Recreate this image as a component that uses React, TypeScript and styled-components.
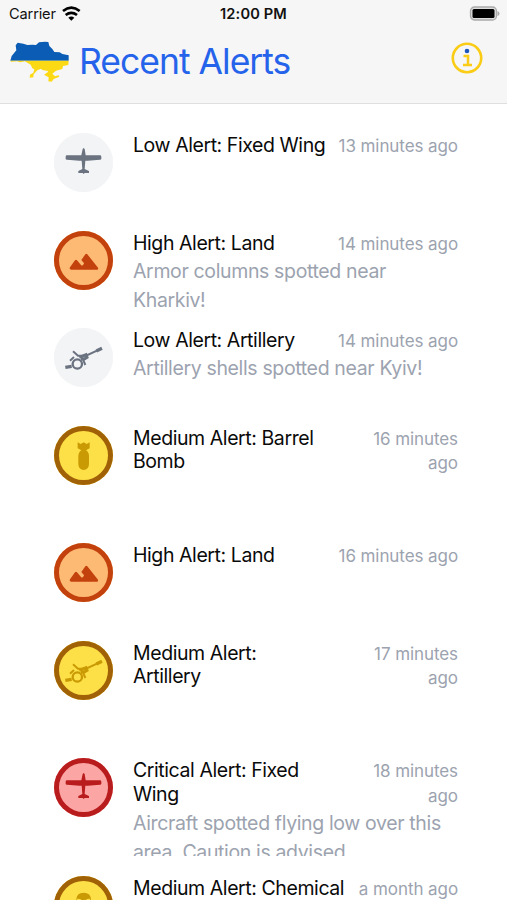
import React from "react";
import styled, { createGlobalStyle } from "styled-components";

const GlobalStyle = createGlobalStyle`
  * { box-sizing: border-box; }
  html, body { margin: 0; padding: 0; background: #fff; }
  body { font-family: Inter, "Liberation Sans", sans-serif; overflow: hidden; }
`;

type Level = "low" | "medium" | "high" | "critical";
type Kind = "plane" | "land" | "artillery" | "bomb" | "chemical";

const palette: Record<Level, { fill: string; ring: string; glyph: string }> = {
  low: { fill: "#f3f4f6", ring: "#f3f4f6", glyph: "#6b7280" },
  medium: { fill: "#fde047", ring: "#a16207", glyph: "#ca9a04" },
  high: { fill: "#fdba74", ring: "#c2410c", glyph: "#c2410c" },
  critical: { fill: "#fca5a5", ring: "#b91c1c", glyph: "#b91c1c" },
};

const Screen = styled.div`
  width: 507px;
  height: 900px;
  overflow: hidden;
  background: #fff;
`;

const Header = styled.header`
  height: 104px;
  background: #f6f6f6;
  border-bottom: 1px solid #dfdfe0;
`;

const StatusBar = styled.div`
  display: grid;
  grid-template-columns: 1fr auto 1fr;
  align-items: center;
  height: 27px;
  padding: 0 7px 0 9px;
  color: #111;
`;

const Carrier = styled.div`
  display: flex;
  align-items: center;
  gap: 6px;
  font-size: 14.6px;
  letter-spacing: -0.15px;
`;

const Clock = styled.div`
  margin-left: -2px;
  font-size: 14.6px;
  font-weight: 600;
  letter-spacing: 0.15px;
`;

const BatterySlot = styled.div`
  display: flex;
  justify-content: flex-end;
`;

const TitleBar = styled.div`
  display: flex;
  align-items: center;
  height: 70px;
  padding: 0 24px 0 10px;
`;

const PageTitle = styled.h1`
  flex: 1;
  margin: 0 0 0 9px;
  font-size: 35.5px;
  font-weight: 400;
  line-height: 44px;
  letter-spacing: -1px;
  color: #2563eb;
`;

const InfoButton = styled.button`
  display: block;
  padding: 0;
  margin: 0 0 8px;
  border: 0;
  background: none;
  line-height: 0;
`;

const List = styled.ul`
  margin: 0;
  padding: 29px 49px 0 54px;
  list-style: none;
`;

const Row = styled.li<{ $tall: boolean }>`
  display: flex;
  gap: 20px;
  height: ${(p) => (p.$tall ? 117.3 : 97.7)}px;
  padding-bottom: 19.5px;
`;

const Badge = styled.div<{ $level: Level }>`
  flex: none;
  width: 59px;
  height: 59px;
  border-radius: 50%;
  background: ${(p) => palette[p.$level].fill};
  box-shadow: inset 0 0 0 5px ${(p) => palette[p.$level].ring};
  color: ${(p) => palette[p.$level].glyph};
`;

const Body = styled.div`
  flex: 1;
  min-width: 0;
  padding-top: 1px;
  overflow: hidden;
`;

const Heading = styled.div`
  display: flex;
  justify-content: space-between;
  align-items: flex-start;
`;

const AlertTitle = styled.h2`
  margin: 0;
  font-size: 19.5px;
  font-weight: 400;
  line-height: 23.4px;
  letter-spacing: -0.42px;
  color: #0a0a0a;
  white-space: pre;
`;

const Time = styled.time`
  font-size: 17px;
  line-height: 24.4px;
  letter-spacing: -0.08px;
  color: #9ca3af;
  text-align: right;
  white-space: pre;
`;

const Description = styled.p`
  margin: 0.5px 0 0;
  font-size: 19.5px;
  line-height: 29.3px;
  letter-spacing: -0.36px;
  color: #9ca3af;
  white-space: pre;
`;

const glyphs: Record<Kind, React.ReactNode> = {
  plane: (
    <path d="M117 76l3-3 3 3 3 19h43q4 0 4 4v6q0 3-4 3l-37 3h-7l-2 25 13 6v6h-13l-3 3-3-3h-13v-6l12-6-2-25h-7l-37-3q-4 0-4-3v-6q0-4 4-4h43z" />
  ),
  land: (
    <path d="M79 142q-2-2 0-5l15-21q3-4 6 0l12 14q3 3 6 0l2-3q2-2 0-4l-7-8 12-17q3-4 6 0l32 40q2 6-3 6H82z" />
  ),
  artillery: (
    <g fill="none" stroke="currentColor">
      <circle cx="101" cy="136" r="14" strokeWidth="7" />
      <path d="M88 98l15 13h24l33-15" strokeWidth="6" />
      <path d="M158 97l17-8" strokeWidth="10" />
      <path d="M107 116l20-8 3 8-8 5h-10" strokeWidth="9" />
      <path d="M79 126l12-11M118 122l7 17" strokeWidth="6" />
      <path d="M65 146l19-3" strokeWidth="10" />
    </g>
  ),
  bomb: (
    <path d="M102 77L111 82L120 77L129 82L138 77V95L127 101Q136 107 136 118V143Q135 159 120 160Q105 159 104 143V118Q104 107 113 101L102 95Z" />
  ),
  chemical: (
    <path
      fillRule="evenodd"
      d="M120 78q22 0 22 22v20q-4 14-22 20-18-6-22-20v-20q0-22 22-22zM101 96q-2 8 5 13 9 1 11-6-6-8-16-7zm38 0q-10-1-16 7 2 7 11 6 7-5 5-13z"
    />
  ),
};

const Glyph = ({ kind }: { kind: Kind }) => (
  <svg width="59" height="59" viewBox="31 28 177 177" fill="currentColor" display="block">
    {glyphs[kind]}
  </svg>
);

const Wifi = () => (
  <svg width="19" height="15" viewBox="186 16 57 45" fill="none" stroke="#000" strokeWidth="8">
    <path d="M189 31q25-20 50 0" />
    <path d="M197 43q17-13 34 0" />
    <path d="M205 51q9-7 18 0l-9 9z" fill="#000" stroke="none" />
  </svg>
);

const Battery = () => (
  <svg width="31" height="15" viewBox="0 0 31 15">
    <rect x="1.5" y="1" width="26" height="13" rx="4" fill="#ddd" stroke="#aaa" strokeWidth="1.3" />
    <rect x="3.5" y="3" width="22" height="9" rx="1.5" fill="#000" />
    <path d="M28.5 5q2 .5 2 2.5t-2 2.5z" fill="#aaa" />
  </svg>
);

const UkraineMap = () => (
  <svg width="60" height="42" viewBox="32 123 180 126">
    <path
      fill="#0b5cb5"
      d="M33 182l4-14 14-17-2-15 6-8 17 3 12 4 15-1 11 1 9-8 18-2 10 1 3 12 9 9 6 9 16 1 8 5 19 4v16z"
    />
    <path
      fill="#fbd914"
      d="M33 182h175l-1 13-16 3-2 9-19 5-11 9 8 8 11-3 2 4-17 7-6 8-10-1 1-12-14-8 11-7 1-4-17-3-4-4-11 5-11 12-1 9-11 1 1-9 10-6 3-10-6-3-5-11-17-10-15 3-8-3-19 1z"
    />
  </svg>
);

const InfoIcon = () => (
  <svg width="32" height="32" viewBox="0 0 32 32">
    <circle cx="16" cy="16" r="14.2" fill="none" stroke="#facc15" strokeWidth="2.6" />
    <circle cx="16" cy="9" r="2.3" fill="#1d56bd" />
    <path d="M12.5 14H17v8.5M12 23h9" fill="none" stroke="#facc15" strokeWidth="2.5" />
  </svg>
);

interface Alert {
  level: Level;
  kind: Kind;
  title: string;
  time: string;
  text?: string;
}

const alerts: Alert[] = [
  { level: "low", kind: "plane", title: "Low Alert: Fixed Wing", time: "13 minutes ago" },
  { level: "high", kind: "land", title: "High Alert: Land", time: "14 minutes ago", text: "Armor columns spotted near\nKharkiv!" },
  { level: "low", kind: "artillery", title: "Low Alert: Artillery", time: "14 minutes ago", text: "Artillery shells spotted near Kyiv!" },
  { level: "medium", kind: "bomb", title: "Medium Alert: Barrel\nBomb", time: "16 minutes\nago" },
  { level: "high", kind: "land", title: "High Alert: Land", time: "16 minutes ago" },
  { level: "medium", kind: "artillery", title: "Medium Alert:\nArtillery", time: "17 minutes\nago" },
  {
    level: "critical",
    kind: "plane",
    title: "Critical Alert: Fixed\nWing",
    time: "18 minutes\nago",
    text: "Aircraft spotted flying low over this\narea. Caution is advised.",
  },
  { level: "medium", kind: "chemical", title: "Medium Alert: Chemical", time: "a month ago" },
];

const AlertRow = ({ alert }: { alert: Alert }) => (
  <Row $tall={alert.title.includes("\n")}>
    <Badge $level={alert.level}>
      <Glyph kind={alert.kind} />
    </Badge>
    <Body>
      <Heading>
        <AlertTitle>{alert.title}</AlertTitle>
        <Time>{alert.time}</Time>
      </Heading>
      {alert.text && <Description>{alert.text}</Description>}
    </Body>
  </Row>
);

export default function App() {
  return (
    <Screen>
      <GlobalStyle />
      <Header>
        <StatusBar>
          <Carrier>
            Carrier <Wifi />
          </Carrier>
          <Clock>12:00 PM</Clock>
          <BatterySlot>
            <Battery />
          </BatterySlot>
        </StatusBar>
        <TitleBar>
          <UkraineMap />
          <PageTitle>Recent Alerts</PageTitle>
          <InfoButton aria-label="Information">
            <InfoIcon />
          </InfoButton>
        </TitleBar>
      </Header>
      <List>
        {alerts.map((alert, i) => (
          <AlertRow key={i} alert={alert} />
        ))}
      </List>
    </Screen>
  );
}
